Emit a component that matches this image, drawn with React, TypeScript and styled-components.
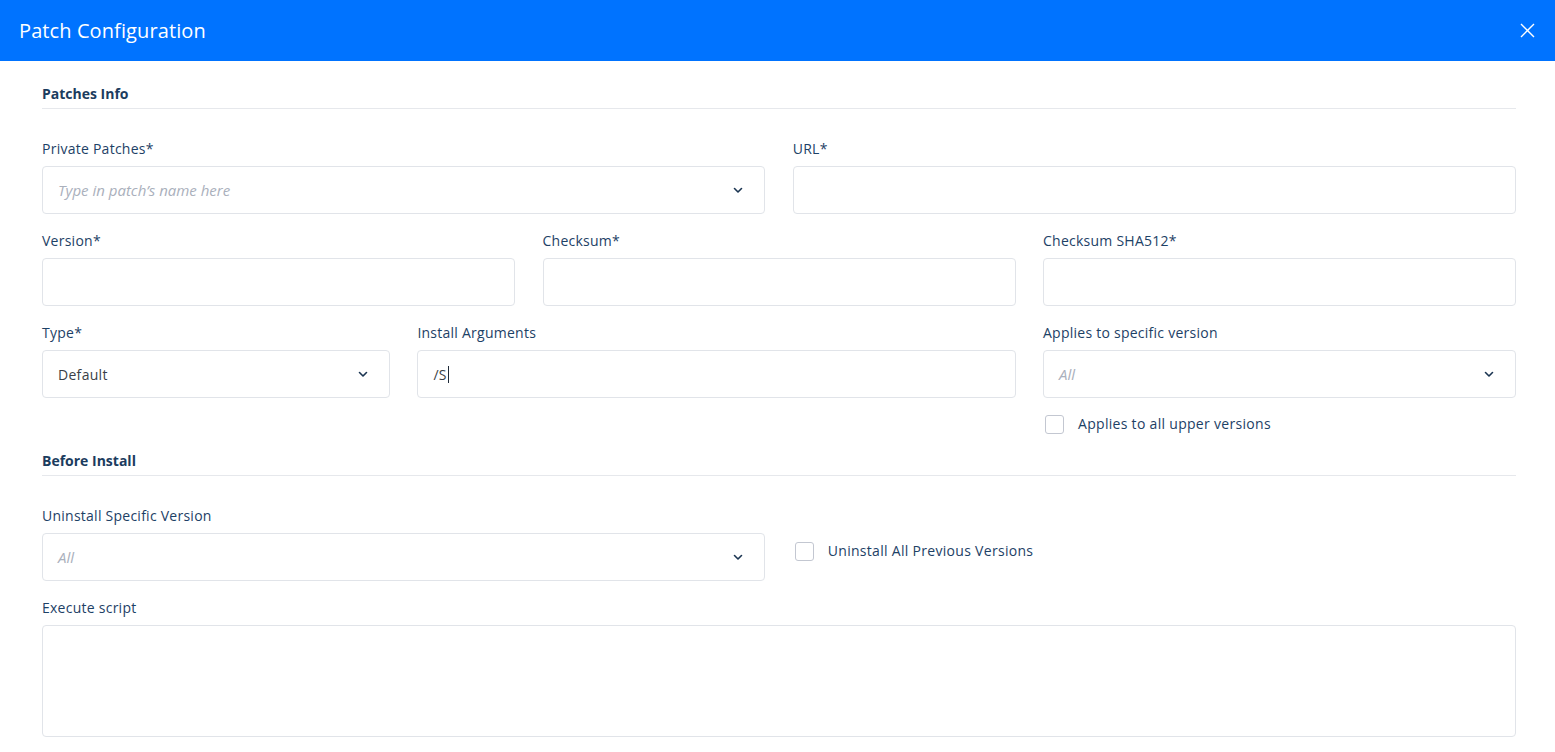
import React from "react";
import styled, { createGlobalStyle } from "styled-components";

const GlobalStyle = createGlobalStyle`
  html, body {
    margin: 0;
    padding: 0;
    background: #ffffff;
    font-family: "Open Sans", "Noto Sans", sans-serif;
  }
  * {
    box-sizing: border-box;
  }
`;

const Modal = styled.div`
  width: 100%;
  min-height: 752px;
  background: #ffffff;
`;

const Header = styled.header`
  height: 61px;
  background: #0073ff;
  display: flex;
  align-items: center;
  justify-content: space-between;
  padding: 0 19px;
`;

const Title = styled.h1`
  margin: 0;
  font-size: 20px;
  font-weight: 400;
  color: #ffffff;
  letter-spacing: 0.1px;
`;

const CloseButton = styled.button`
  border: none;
  background: transparent;
  padding: 0;
  margin-right: 1px;
  width: 16px;
  height: 16px;
  display: flex;
  align-items: center;
  justify-content: center;
  cursor: pointer;
`;

const Body = styled.div`
  padding: 23px 39px 0 42px;
`;

const SectionTitle = styled.h2`
  margin: 0 0 30px;
  padding-bottom: 4px;
  font-size: 14px;
  line-height: 20px;
  font-weight: 700;
  color: #1b3c5e;
  border-bottom: 1px solid #e6e8ec;
`;

const Grid = styled.div`
  display: grid;
  grid-template-columns: repeat(12, 1fr);
  column-gap: 27.5px;
  row-gap: 17px;
`;

const Field = styled.div<{ $span: number }>`
  grid-column: span ${({ $span }) => $span};
  display: flex;
  flex-direction: column;
`;

const Label = styled.label`
  font-size: 14px;
  line-height: 20px;
  letter-spacing: 0.25px;
  color: #1d4166;
  margin-bottom: 7px;
`;

const Box = styled.div<{ $tall?: boolean }>`
  height: ${({ $tall }) => ($tall ? "112px" : "48px")};
  border: 1px solid #e1e4e9;
  border-radius: 4px;
  background: #ffffff;
  display: flex;
  align-items: center;
  justify-content: space-between;
  padding: 0 20px 0 15px;
`;

const Value = styled.span`
  font-size: 14px;
  letter-spacing: 0.3px;
  color: #3a3f47;
  display: flex;
  align-items: center;
`;

const Placeholder = styled.span`
  font-size: 15px;
  font-style: italic;
  color: #aab0bc;
`;

const Caret = styled.span`
  display: inline-block;
  width: 1px;
  height: 17px;
  background: #1e2a38;
  margin-left: 1px;
`;

const CheckRow = styled.label<{ $offset: number }>`
  display: flex;
  align-items: center;
  gap: 14px;
  margin-top: ${({ $offset }) => $offset}px;
  margin-left: 2px;
  font-size: 14px;
  line-height: 20px;
  letter-spacing: 0.3px;
  color: #1d4166;
`;

const CheckBox = styled.span`
  width: 19px;
  height: 19px;
  border: 1.5px solid #c3c7d1;
  border-radius: 3px;
  background: #ffffff;
  flex-shrink: 0;
`;

const Section = styled.section<{ $mb?: number }>`
  margin-bottom: ${({ $mb }) => $mb ?? 0}px;
`;

const Chevron = () => (
  <svg width="12" height="12" viewBox="0 0 12 12" fill="none">
    <path
      d="M2.5 4.5L6 8l3.5-3.5"
      stroke="#1b3552"
      strokeWidth="1.6"
      strokeLinecap="round"
      strokeLinejoin="round"
    />
  </svg>
);

const CloseIcon = () => (
  <svg width="15" height="15" viewBox="0 0 15 15" fill="none">
    <path d="M1 1l13 13M14 1L1 14" stroke="#ffffff" strokeWidth="1.4" />
  </svg>
);

type SelectProps = { value?: string; placeholder?: string };

const SelectBox = ({ value, placeholder }: SelectProps) => (
  <Box>
    {value ? <Value>{value}</Value> : <Placeholder>{placeholder}</Placeholder>}
    <Chevron />
  </Box>
);

export default function App() {
  return (
    <>
      <GlobalStyle />
      <Modal>
        <Header>
          <Title>Patch Configuration</Title>
          <CloseButton aria-label="Close">
            <CloseIcon />
          </CloseButton>
        </Header>
        <Body>
          <Section $mb={17}>
            <SectionTitle>Patches Info</SectionTitle>
            <Grid>
              <Field $span={6}>
                <Label>Private Patches*</Label>
                <SelectBox placeholder="Type in patch’s name here" />
              </Field>
              <Field $span={6}>
                <Label>URL*</Label>
                <Box />
              </Field>
              <Field $span={4}>
                <Label>Version*</Label>
                <Box />
              </Field>
              <Field $span={4}>
                <Label>Checksum*</Label>
                <Box />
              </Field>
              <Field $span={4}>
                <Label>Checksum SHA512*</Label>
                <Box />
              </Field>
              <Field $span={3}>
                <Label>Type*</Label>
                <SelectBox value="Default" />
              </Field>
              <Field $span={5}>
                <Label>Install Arguments</Label>
                <Box>
                  <Value>
                    /S
                    <Caret />
                  </Value>
                </Box>
              </Field>
              <Field $span={4}>
                <Label>Applies to specific version</Label>
                <SelectBox placeholder="All" />
                <CheckRow $offset={16}>
                  <CheckBox />
                  Applies to all upper versions
                </CheckRow>
              </Field>
            </Grid>
          </Section>
          <Section>
            <SectionTitle>Before Install</SectionTitle>
            <Grid>
              <Field $span={6}>
                <Label>Uninstall Specific Version</Label>
                <SelectBox placeholder="All" />
              </Field>
              <Field $span={6}>
                <CheckRow $offset={35}>
                  <CheckBox />
                  Uninstall All Previous Versions
                </CheckRow>
              </Field>
              <Field $span={12}>
                <Label>Execute script</Label>
                <Box $tall />
              </Field>
            </Grid>
          </Section>
        </Body>
      </Modal>
    </>
  );
}
